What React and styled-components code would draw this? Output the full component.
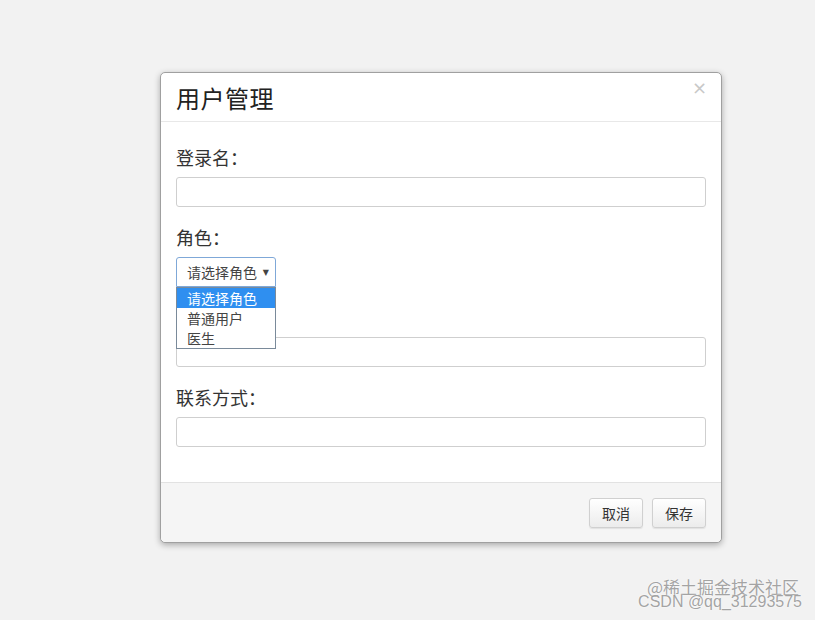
import React from "react";
import styled, { createGlobalStyle } from "styled-components";

const GlobalStyle = createGlobalStyle`
  html, body {
    margin: 0;
    padding: 0;
    background: #f2f2f2;
    font-family: "Noto Sans CJK SC", "Noto Sans", sans-serif;
    color: #333;
  }
`;

function App() {
  return (
    <Page>
      <GlobalStyle />
      <Dialog>
        <Header>
          <Title>用户管理</Title>
          <Close>×</Close>
        </Header>
        <Body>
          <Group>
            <Label>登录名：</Label>
            <Input />
          </Group>
          <Group>
            <Label>角色：</Label>
            <SelectWrap>
              <Select>
                <SelectText>请选择角色</SelectText>
                <Caret>▼</Caret>
              </Select>
              <Options>
                <Option active>请选择角色</Option>
                <Option>普通用户</Option>
                <Option>医生</Option>
              </Options>
            </SelectWrap>
          </Group>
          <Group>
            <Spacer />
            <Input />
          </Group>
          <Group>
            <Label>联系方式：</Label>
            <Input />
          </Group>
        </Body>
        <Footer>
          <Button>取消</Button>
          <Button>保存</Button>
        </Footer>
      </Dialog>
      <Watermark>
        <WaterLine>@稀土掘金技术社区</WaterLine>
        <WaterLine latin>CSDN @qq_31293575</WaterLine>
      </Watermark>
    </Page>
  );
}

export default App;

const Page = styled.div`
  position: relative;
  width: 815px;
  height: 620px;
  box-sizing: border-box;
  padding: 72px 0 0 160px;
  overflow: hidden;
`;

const Dialog = styled.div`
  width: 562px;
  background: #fff;
  border: 1px solid #a0a0a0;
  border-radius: 5px;
  box-shadow: 0 2px 6px rgba(0, 0, 0, 0.3);
  box-sizing: border-box;
`;

const Header = styled.div`
  height: 49px;
  display: flex;
  align-items: center;
  justify-content: space-between;
  padding: 0 15px;
  border-bottom: 1px solid #e8e8e8;
  box-sizing: border-box;
`;

const Title = styled.h4`
  margin: 0;
  font-size: 24px;
  font-weight: 400;
  color: #222;
  letter-spacing: 0.5px;
`;

const Close = styled.span`
  align-self: flex-start;
  margin-top: 4px;
  margin-right: -1px;
  font-family: "DejaVu Sans", sans-serif;
  font-size: 18px;
  color: #c8c8c8;
  line-height: 22px;
`;

const Body = styled.div`
  display: flex;
  flex-direction: column;
  gap: 21px;
  padding: 26px 15px 35px;
`;

const Group = styled.div`
  display: flex;
  flex-direction: column;
  align-items: flex-start;
`;

const Label = styled.label`
  font-size: 18px;
  line-height: 18px;
  height: 20px;
  margin-bottom: 9px;
  color: #333;
`;

const Spacer = styled.div`
  height: 20px;
  margin-bottom: 9px;
`;

const Input = styled.div`
  width: 100%;
  height: 30px;
  border: 1px solid #cfcfcf;
  border-radius: 3px;
  box-sizing: border-box;
  background: #fff;
`;

const SelectWrap = styled.div`
  position: relative;
  width: 100px;
`;

const Select = styled.div`
  height: 30px;
  display: flex;
  align-items: center;
  padding: 0 6px 0 10px;
  border: 1px solid #7fa8d8;
  border-radius: 3px 3px 0 0;
  box-sizing: border-box;
  background: #fff;
  font-size: 14px;
  color: #444;
`;

const SelectText = styled.span`
  width: 71px;
  overflow: hidden;
  white-space: nowrap;
`;

const Caret = styled.span`
  font-family: "DejaVu Sans", sans-serif;
  font-size: 8px;
  color: #444;
  margin-left: 5px;
`;

const Options = styled.ul`
  position: absolute;
  top: 30px;
  left: 0;
  width: 100px;
  margin: 0;
  padding: 0;
  list-style: none;
  border: 1px solid #7a8a9a;
  box-sizing: border-box;
  background: #fff;
  z-index: 5;
`;

const Option = styled.li`
  height: 20px;
  line-height: 20px;
  padding-left: 10px;
  font-size: 14px;
  color: ${(p) => (p.active ? "#fff" : "#444")};
  background: ${(p) => (p.active ? "#2f8ff0" : "#fff")};
`;

const Footer = styled.div`
  height: 59px;
  display: flex;
  align-items: center;
  justify-content: flex-end;
  gap: 9px;
  padding: 0 15px;
  border-top: 1px solid #e2e2e2;
  background: #f5f5f5;
  border-radius: 0 0 5px 5px;
`;

const Button = styled.button`
  width: 54px;
  height: 30px;
  font-family: "Noto Sans CJK SC", sans-serif;
  font-size: 14px;
  color: #333;
  background: linear-gradient(#ffffff, #ececec);
  border: 1px solid #d0d0d0;
  border-radius: 3px;
  box-shadow: 0 1px 1px rgba(0, 0, 0, 0.08);
  padding: 0;
`;

const Watermark = styled.div`
  position: absolute;
  right: 14px;
  bottom: 10px;
  display: flex;
  flex-direction: column;
  align-items: flex-end;
`;

const WaterLine = styled.span`
  font-family: ${(p) =>
    p.latin ? '"Liberation Sans", sans-serif' : '"Noto Sans CJK SC", sans-serif'};
  font-size: ${(p) => (p.latin ? "16px" : "17px")};
  line-height: ${(p) => (p.latin ? "16px" : "14px")};
  margin-right: ${(p) => (p.latin ? "-1px" : "2px")};
  color: rgba(125, 125, 125, 0.7);
  text-shadow: 0 0 2px #fff;
`;
